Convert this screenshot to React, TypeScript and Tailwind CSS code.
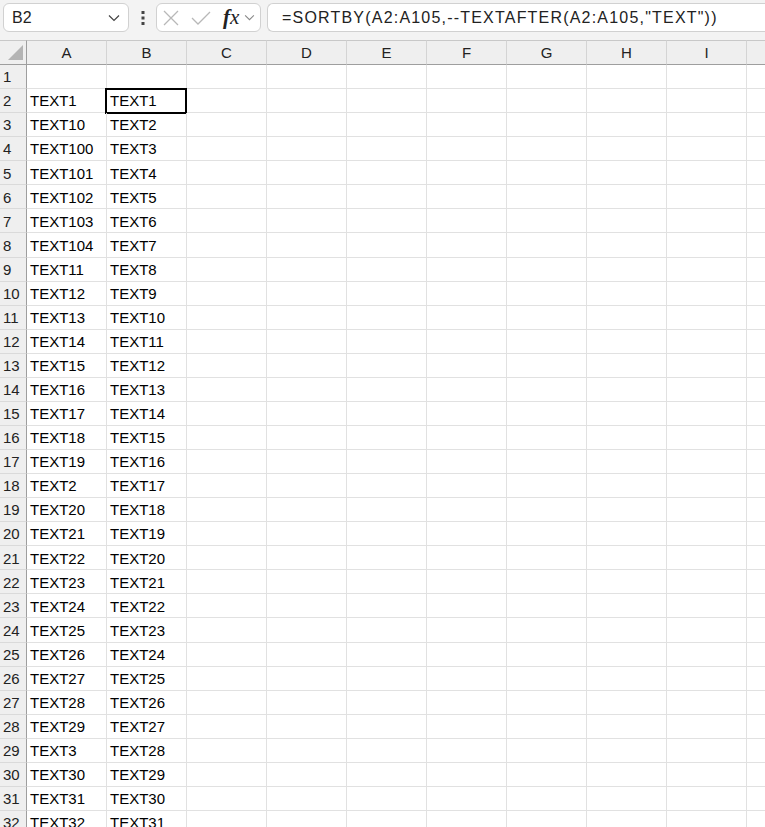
import React from "react";

const colA = [
  "TEXT1", "TEXT10", "TEXT100", "TEXT101", "TEXT102", "TEXT103", "TEXT104",
  "TEXT11", "TEXT12", "TEXT13", "TEXT14", "TEXT15", "TEXT16", "TEXT17", "TEXT18", "TEXT19",
  "TEXT2", "TEXT20", "TEXT21", "TEXT22", "TEXT23", "TEXT24", "TEXT25", "TEXT26", "TEXT27", "TEXT28", "TEXT29",
  "TEXT3", "TEXT30", "TEXT31", "TEXT32",
];
const colB = Array.from({ length: 31 }, (_, i) => `TEXT${i + 1}`);
const letters = ["A", "B", "C", "D", "E", "F", "G", "H", "I", ""];

function Chevron({ className }: { className?: string }) {
  return (
    <svg viewBox="0 0 12 8" className={className} fill="none" stroke="currentColor" strokeWidth="1.2">
      <path d="M1 1.5l5 5 5-5" />
    </svg>
  );
}

function FormulaBar() {
  return (
    <div className="flex h-[40px] items-start bg-[#f3f3f3] pt-[3px]">
      {/* name box */}
      <div className="ml-[3px] flex h-[29px] w-[126px] shrink-0 items-center justify-between rounded-[6px] border border-[#d1d1d1] bg-white pl-[8px] pr-[8px]">
        <span className="text-[16px] text-[#222]">B2</span>
        <Chevron className="h-[8px] w-[12px] text-[#444]" />
      </div>
      {/* dots */}
      <div className="flex h-[29px] w-[27px] shrink-0 items-center justify-center">
        <svg viewBox="0 0 4 14" className="h-[14px] w-[4px]" fill="#444">
          <rect x="0.5" y="0" width="3" height="3" />
          <rect x="0.5" y="5.5" width="3" height="3" />
          <rect x="0.5" y="11" width="3" height="3" />
        </svg>
      </div>
      {/* cancel / enter / fx */}
      <div className="flex h-[29px] w-[105px] shrink-0 items-center rounded-[6px] border border-[#d1d1d1] bg-white pl-[6px]">
        <svg viewBox="0 0 16 16" className="h-[16px] w-[16px]" fill="none" stroke="#b8b8b8" strokeWidth="1.3">
          <path d="M1 1l14 14M15 1L1 15" />
        </svg>
        <svg viewBox="0 0 20 14" className="ml-[12px] h-[14px] w-[20px]" fill="none" stroke="#b8b8b8" strokeWidth="1.3">
          <path d="M1 7l6 6L19 1" />
        </svg>
        <span
          className="ml-[12px] text-[21px] italic leading-none text-[#222]"
          style={{ fontFamily: '"Liberation Serif", serif' }}
        >
          <span className="font-bold">f</span>x
        </span>
        <Chevron className="ml-[5px] h-[7px] w-[11px] text-[#888]" />
      </div>
      {/* formula */}
      <div className="ml-[6px] flex h-[29px] flex-1 items-center rounded-l-[6px] border border-r-0 border-[#d1d1d1] bg-white pl-[14px]">
        <span className="whitespace-nowrap text-[16px] tracking-[1.2px] text-[#222]">
          =SORTBY(A2:A105,--TEXTAFTER(A2:A105,"TEXT"))
        </span>
      </div>
    </div>
  );
}

export default function App() {
  return (
    <div
      className="h-[827px] w-[765px] overflow-hidden bg-white"
      style={{ fontFamily: '"Liberation Sans", Arial, sans-serif' }}
    >
      <FormulaBar />
      <div className="grid grid-cols-[27px_repeat(10,80px)]">
        {/* header row */}
        <div className="relative h-[25px] border-t border-r border-b border-t-[#c8c8c8] border-b-[#9e9e9e] border-r-[#9e9e9e] bg-[#efefef]">
          <svg viewBox="0 0 15 15" className="absolute left-[8px] top-[4px] h-[15px] w-[15px]">
            <path d="M15 0V15H0Z" fill="#b4b4b4" />
          </svg>
        </div>
        {letters.map((l, i) => (
          <div
            key={i}
            className="flex h-[25px] items-center justify-center border-t border-r border-b border-t-[#c8c8c8] border-r-[#d4d4d4] border-b-[#9e9e9e] bg-[#efefef] pt-[1px] text-[15px] text-[#222]"
          >
            {l}
          </div>
        ))}
        {/* body rows */}
        {Array.from({ length: 32 }, (_, r) => (
          <React.Fragment key={r}>
            <div className="flex h-[24.07px] items-center border-r border-b border-r-[#9e9e9e] border-b-[#dadada] bg-[#efefef] pl-[3px] pt-[2px] text-[15px] text-[#222]">
              {r + 1}
            </div>
            {letters.map((_, c) => {
              const text = r === 0 ? "" : c === 0 ? colA[r - 1] : c === 1 ? colB[r - 1] : "";
              const selected = r === 1 && c === 1;
              return (
                <div
                  key={c}
                  className="relative flex h-[24.07px] items-center border-r border-b border-[#e1e1e1] pl-[3px] pt-[2px] text-[15px] text-black"
                >
                  {text}
                  {selected && (
                    <div className="pointer-events-none absolute -left-[2px] -top-[1px] h-[26px] w-[82px] border-2 border-black" />
                  )}
                </div>
              );
            })}
          </React.Fragment>
        ))}
      </div>
    </div>
  );
}
